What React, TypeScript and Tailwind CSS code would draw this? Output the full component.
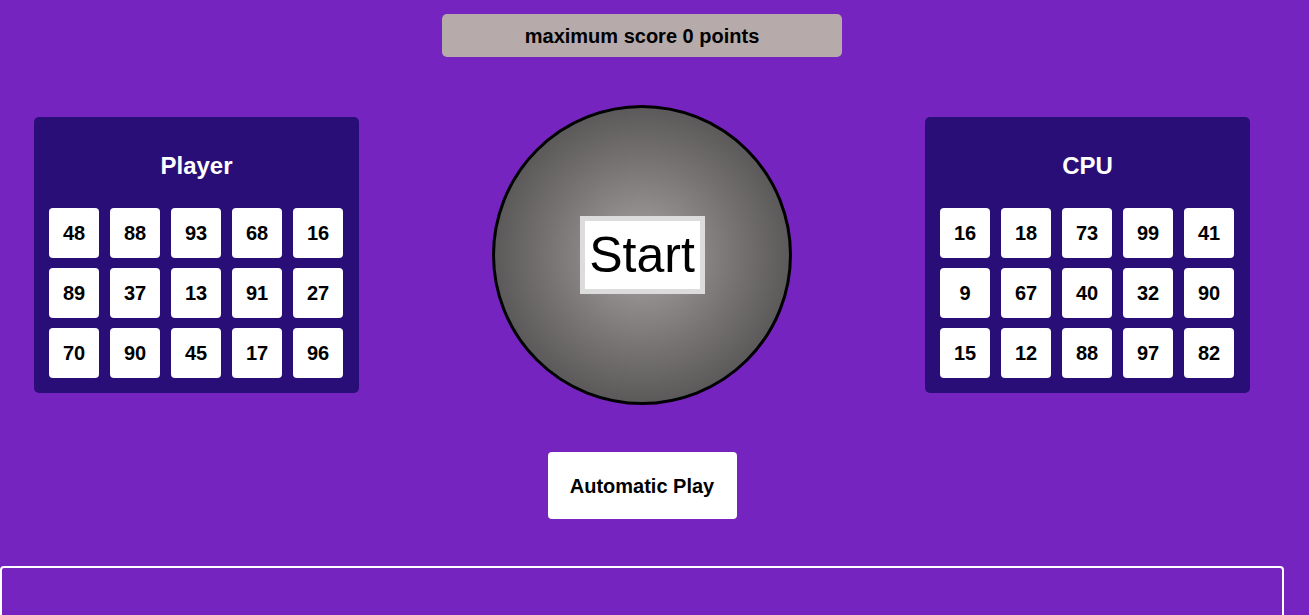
const player = [48, 88, 93, 68, 16, 89, 37, 13, 91, 27, 70, 90, 45, 17, 96];
const cpu = [16, 18, 73, 99, 41, 9, 67, 40, 32, 90, 15, 12, 88, 97, 82];

function Board({ title, numbers }: { title: string; numbers: number[] }) {
  return (
    <div className="w-[325px] h-[276px] bg-[#2a0e78] rounded-[5px] px-[15px] pt-[34px]">
      <h2 className="text-center text-white font-bold text-[24px] leading-[30px]">{title}</h2>
      <div className="mt-[27px] grid grid-cols-[repeat(5,50px)] gap-x-[11px] gap-y-[10px]">
        {numbers.map((n, i) => (
          <div
            key={i}
            className="w-[50px] h-[50px] bg-white rounded-[4px] flex items-center justify-center text-[20px] font-bold text-black"
          >
            {n}
          </div>
        ))}
      </div>
    </div>
  );
}

export default function App() {
  return (
    <div
      className="min-h-[615px] bg-[#7624bf] overflow-hidden"
      style={{ fontFamily: '"Liberation Sans", Arial, sans-serif' }}
    >
      <div className="w-[1284px] flex flex-col items-center">
        <div className="mt-[14px] w-[400px] h-[43px] bg-[#b6aaaa] rounded-[5px] flex items-center justify-center text-[20px] font-bold text-black">
          maximum score 0 points
        </div>

        <div className="mt-[48px] w-full px-[34px] flex items-center justify-between">
          <Board title="Player" numbers={player} />
          <div className="w-[300px] h-[300px] rounded-full border-[3px] border-black bg-[radial-gradient(circle,#aaa4a4_0%,#777373_45%,#3c3c3c_100%)] flex items-center justify-center">
            <div className="w-[125px] h-[78px] border-[5px] border-[#dcdcdc] bg-white flex items-center justify-center text-[50px] text-black leading-none">
              Start
            </div>
          </div>
          <Board title="CPU" numbers={cpu} />
        </div>

        <button className="mt-[47px] w-[189px] h-[67px] bg-white rounded-[4px] text-[20px] font-bold text-black">
          Automatic Play
        </button>

        <div className="mt-[47px] w-full h-[60px] border-2 border-white rounded-t-[4px]" />
      </div>
    </div>
  );
}
